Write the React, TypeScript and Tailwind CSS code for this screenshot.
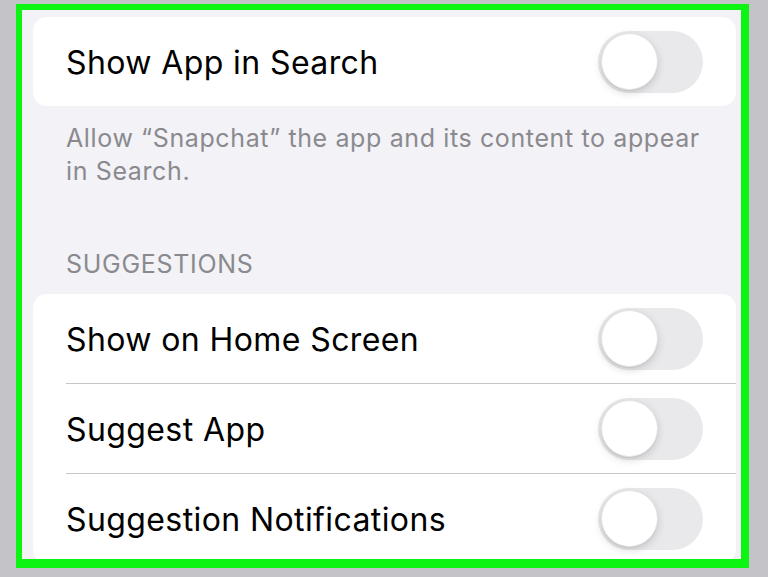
import React from 'react';

const Toggle: React.FC = () => (
  <div className="w-[105px] h-[62px] rounded-full bg-[#e9e9eb] flex items-center pl-[3px] shrink-0">
    <div className="w-[57px] h-[57px] rounded-full bg-white shadow-[0_3px_8px_rgba(0,0,0,0.15),0_1px_1px_rgba(0,0,0,0.06)] border border-[#e4e4e6]" />
  </div>
);

interface RowProps {
  label: string;
  divider?: boolean;
}

const Row: React.FC<RowProps> = ({ label, divider }) => (
  <div>
    <div className="h-[89px] flex items-center justify-between pl-[33px] pr-[33px]">
      <span className="text-[32px] pt-[3px] text-black tracking-[0.4px]">{label}</span>
      <Toggle />
    </div>
    {divider && <div className="ml-[33px] h-px bg-[#c6c6c8]" />}
  </div>
);

export default function App() {
  return (
    <div className="w-[768px] h-[577px] bg-[#c4c4c8] pl-4 pt-1 pr-[19px] pb-[9px]" style={{ fontFamily: 'Inter, "Liberation Sans", sans-serif' }}>
      <div className="h-full border-l-[6px] border-t-[6px] border-r-[8px] border-b-[9px] border-[#0cf512] bg-[#f2f2f7] overflow-hidden pt-[7px] pl-[11px] pr-[5px]">
        <div className="bg-white rounded-[14px]">
          <Row label="Show App in Search" />
        </div>
        <p className="mt-[16px] pl-[33px] pr-[26px] text-[25px] leading-[33px] tracking-[0.62px] text-[#8a8a8e]">
          Allow “Snapchat” the app and its content to appear in Search.
        </p>
        <p className="mt-[60px] px-[33px] text-[25px] leading-[33px] tracking-[0.7px] text-[#8a8a8e] uppercase">
          Suggestions
        </p>
        <div className="mt-[13px] bg-white rounded-[14px]">
          <Row label="Show on Home Screen" divider />
          <Row label="Suggest App" divider />
          <Row label="Suggestion Notifications" />
        </div>
      </div>
    </div>
  );
}
